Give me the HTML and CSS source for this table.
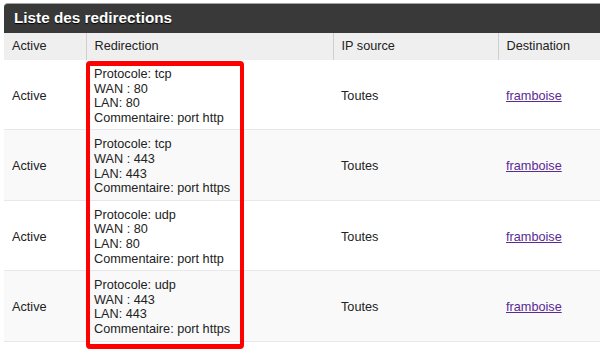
FILE: index.html
```html
<!DOCTYPE html>
<html lang="fr">
<head>
<meta charset="utf-8">
<title>Liste des redirections</title>
<link rel="stylesheet" href="styles.css">
</head>
<body>
<div class="panel">
  <div class="panel-title">Liste des redirections</div>
  <table class="redir">
    <colgroup>
      <col class="c-active">
      <col class="c-redir">
      <col class="c-ip">
      <col class="c-dest">
    </colgroup>
    <thead>
      <tr><th>Active</th><th>Redirection</th><th>IP source</th><th>Destination</th></tr>
    </thead>
    <tbody>
      <tr>
        <td>Active</td>
        <td class="detail">Protocole: tcp<br>WAN : 80<br>LAN: 80<br>Commentaire: port http</td>
        <td>Toutes</td>
        <td><a href="#">framboise</a></td>
      </tr>
      <tr class="alt">
        <td>Active</td>
        <td class="detail">Protocole: tcp<br>WAN : 443<br>LAN: 443<br>Commentaire: port https</td>
        <td>Toutes</td>
        <td><a href="#">framboise</a></td>
      </tr>
      <tr>
        <td>Active</td>
        <td class="detail">Protocole: udp<br>WAN : 80<br>LAN: 80<br>Commentaire: port http</td>
        <td>Toutes</td>
        <td><a href="#">framboise</a></td>
      </tr>
      <tr class="alt">
        <td>Active</td>
        <td class="detail">Protocole: udp<br>WAN : 443<br>LAN: 443<br>Commentaire: port https</td>
        <td>Toutes</td>
        <td><a href="#">framboise</a></td>
      </tr>
    </tbody>
  </table>
  <div class="highlight"></div>
</div>
</body>
</html>
```

FILE: styles.css
```css
html, body {
  margin: 0;
  padding: 0;
  background: #ffffff;
  overflow: hidden;
}

body {
  font-family: "Liberation Sans", Arial, sans-serif;
  color: #222222;
  width: 600px;
  height: 354px;
}

.panel {
  position: relative;
  margin: 3px 0 0 4px;
  width: 660px;
}

.panel-title {
  background: #393939;
  border-top: 1px solid #a3a3a3;
  border-top-left-radius: 4px;
  height: 29px;
  padding-left: 10px;
  color: #ffffff;
  font-weight: bold;
  font-size: 15.3px;
  line-height: 28px;
  text-shadow: 0 1px 1px #000000;
}

.redir {
  width: 100%;
  border-collapse: collapse;
  font-size: 12.7px;
}

.c-active { width: 82px; }
.c-redir { width: 247px; }
.c-ip { width: 165px; }

.redir th {
  background: #efefef;
  height: 27px;
  padding: 0 8px;
  text-align: left;
  font-weight: normal;
  line-height: 27px;
  border-left: 1px solid #cfcfcf;
}

.redir th:first-child {
  border-left: none;
}

.redir td {
  padding: 6.8px 8px 3.8px;
  line-height: 14.7px;
  vertical-align: middle;
  border-bottom: 1px solid #e8e8e8;
}

.redir tr.alt td {
  background: #f9f9f9;
}

.redir a {
  color: #5a2a96;
  text-decoration: underline;
}

.highlight {
  position: absolute;
  left: 82px;
  top: 58px;
  width: 150px;
  height: 278px;
  border: 4px solid #ff0000;
  border-width: 5px 4px;
  border-radius: 4px;
}
```
